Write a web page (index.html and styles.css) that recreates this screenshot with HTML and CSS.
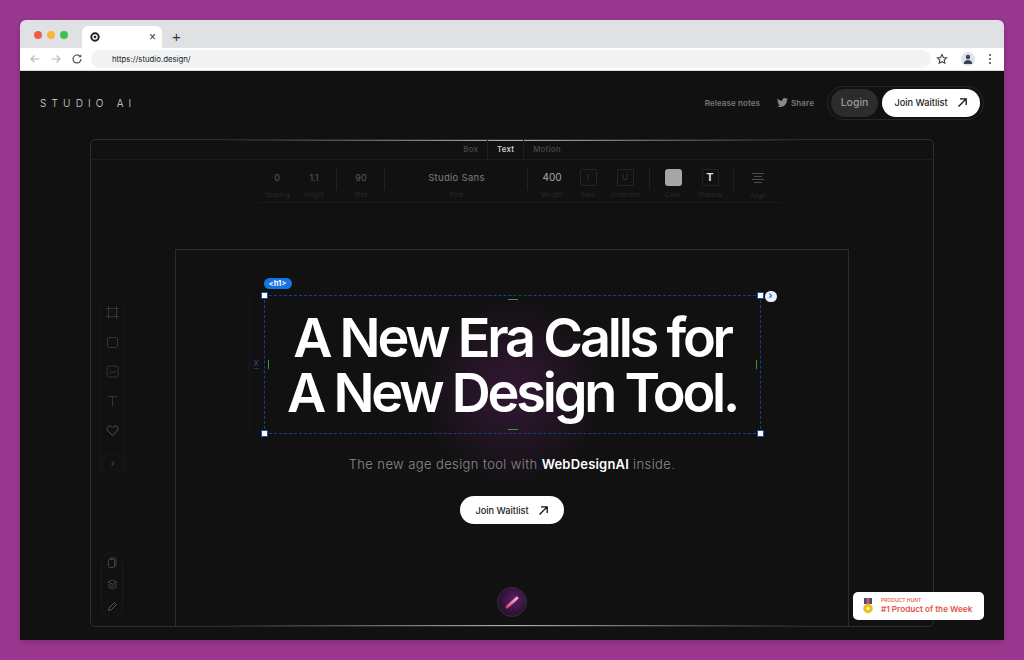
FILE: index.html
```html
<!DOCTYPE html>
<html lang="en">

<head>
    <meta charset="UTF-8">
    <title>Studio AI</title>
    <link rel="stylesheet" href="styles.css">
</head>

<body>

    <div class="window">
        <div class="tabstrip">
            <div class="lights">
                <span class="light red"></span>
                <span class="light yellow"></span>
                <span class="light green"></span>
            </div>
            <div class="tab">
                <svg class="favicon" width="10" height="10" viewBox="0 0 10 10">
                    <circle cx="5" cy="5" r="3.700" fill="none" stroke="#222" stroke-width="2" />
                    <circle cx="5" cy="5" r="1.300" fill="#222" />
                </svg>
                <span class="tab-close">×</span>
            </div>
            <span class="tab-new">+</span>
        </div>

        <div class="toolbar">
            <svg class="nav-icon" width="12" height="12" viewBox="0 0 12 12">
                <path d="M10.500 6H2M5.500 2.500 2 6l3.500 3.500" fill="none" stroke="#b8b8b8" stroke-width="1.100" />
            </svg>
            <svg class="nav-icon" width="12" height="12" viewBox="0 0 12 12">
                <path d="M1.500 6H10M6.500 2.500 10 6l-3.500 3.500" fill="none" stroke="#b8b8b8" stroke-width="1.100" />
            </svg>
            <svg class="nav-icon" width="12" height="12" viewBox="0 0 12 12">
                <path d="M10 6a4 4 0 1 1-1.200-2.900" fill="none" stroke="#555" stroke-width="1.200" />
                <path d="M10.300 1.300v3h-3z" fill="#555" />
            </svg>
            <div class="urlbar">https://studio.design/</div>
            <svg class="star" width="12" height="12" viewBox="0 0 24 24">
                <path d="M12 3l2.800 6 6.400.7-4.800 4.400 1.300 6.400L12 17.300 6.300 20.500l1.300-6.400L2.800 9.700 9.200 9z" fill="none" stroke="#444" stroke-width="2.200" />
            </svg>
            <div class="avatar">
                <svg width="10" height="10" viewBox="0 0 10 10">
                    <circle cx="5" cy="3" r="2.200" fill="#3c4354" />
                    <path d="M.8 10c0-3 2-4 4.200-4s4.200 1 4.200 4z" fill="#3c4354" />
                </svg>
            </div>
            <div class="dots"><span></span><span></span><span></span></div>
        </div>

        <div class="stage">
            <header class="topnav">
                <div class="logo">STUDIO AI</div>
                <nav class="topnav-links">
                    <a class="toplink">Release notes</a>
                    <a class="toplink share">
                        <svg width="11" height="11" viewBox="0 0 24 24">
                            <path d="M23.950 4.570a10 10 0 0 1-2.820.77 4.960 4.960 0 0 0 2.160-2.720c-.95.55-2 .96-3.120 1.200a4.920 4.920 0 0 0-8.380 4.480C7.690 8.100 4.070 6.130 1.640 3.160a4.820 4.820 0 0 0-.67 2.480c0 1.710.87 3.210 2.190 4.100a4.900 4.900 0 0 1-2.230-.62v.06a4.920 4.920 0 0 0 3.950 4.830 5 5 0 0 1-2.210.08 4.940 4.940 0 0 0 4.600 3.420A9.870 9.870 0 0 1 0 19.540a14 14 0 0 0 7.560 2.210c9.050 0 14-7.500 14-13.980 0-.21 0-.42-.01-.63a9.940 9.940 0 0 0 2.460-2.550z" fill="#8a8a8a" />
                        </svg>
                        Share
                    </a>
                    <div class="auth">
                        <a class="login">Login</a>
                        <a class="join">Join Waitlist
                            <svg width="11" height="11" viewBox="0 0 11 11">
                                <path d="M1.500 9.500 9 2M3 1.800h6.200V8" fill="none" stroke="#111" stroke-width="1.300" />
                            </svg>
                        </a>
                    </div>
                </nav>
            </header>

            <section class="editor">
                <div class="modes">
                    <span class="mode">Box</span>
                    <span class="mode active">Text</span>
                    <span class="mode">Motion</span>
                </div>

                <div class="props">
                    <div class="prop-group group-a">
                        <div class="prop w38"><b>0</b><small>Spacing</small></div>
                        <div class="prop w36"><b>1.1</b><small>Height</small></div>
                    </div>
                    <div class="prop-group">
                        <div class="prop w48"><b>90</b><small>Size</small></div>
                    </div>
                    <div class="prop-group">
                        <div class="prop w143"><b class="font-name">Studio Sans</b><small>Font</small></div>
                    </div>
                    <div class="prop-group">
                        <div class="prop w48"><b class="bright">400</b><small>Weight</small></div>
                        <div class="prop w24"><i class="boxed">I</i><small>Italic</small></div>
                        <div class="prop w50"><i class="boxed">U</i><small>Underline</small></div>
                    </div>
                    <div class="prop-group group-e">
                        <div class="prop w46"><i class="swatch"></i><small>Color</small></div>
                        <div class="prop w28"><i class="boxed strong">T</i><small>Shadow</small></div>
                    </div>
                    <div class="prop-group group-f">
                        <div class="prop w48">
                            <svg class="align-icon" width="12" height="12" viewBox="0 0 12 12">
                                <path d="M0 1.500h12M2 4.500h8M0 7.500h12M2 10.500h8" stroke="#4c4c4c" stroke-width="1" />
                            </svg>
                            <small>Align</small>
                        </div>
                    </div>
                </div>

                <div class="artboard">
                    <div class="selection">
                        <span class="tag">&lt;h1&gt;</span>
                        <span class="chevron-badge">›</span>
                        <span class="handle tl"></span>
                        <span class="handle tr"></span>
                        <span class="handle bl"></span>
                        <span class="handle br"></span>
                        <span class="tick top"></span>
                        <span class="tick bottom"></span>
                        <span class="tick left"></span>
                        <span class="tick right"></span>
                        <span class="x-mark">X</span>
                        <h1>A New Era Calls for<br>A New Design Tool.</h1>
                    </div>
                    <p class="subtitle">The new age design tool with <strong>WebDesignAI</strong> inside.</p>
                    <a class="join hero-join">Join Waitlist
                        <svg width="11" height="11" viewBox="0 0 11 11">
                            <path d="M1.500 9.500 9 2M3 1.800h6.200V8" fill="none" stroke="#111" stroke-width="1.300" />
                        </svg>
                    </a>
                </div>

                <div class="tools">
                    <svg width="13" height="13" viewBox="0 0 13 13">
                        <path d="M0 2.500h13M0 10.500h13M2.500 0v13M10.500 0v13" fill="none" stroke="#353535" />
                    </svg>
                    <svg width="13" height="13" viewBox="0 0 13 13">
                        <rect x="1.500" y="1.500" width="10" height="10" rx="1" fill="none" stroke="#353535" />
                    </svg>
                    <svg width="13" height="13" viewBox="0 0 13 13">
                        <rect x="1" y="1" width="11" height="11" rx="1.500" fill="none" stroke="#353535" />
                        <path d="M3 9l2-2.500 2 1.500 3-2.500" fill="none" stroke="#353535" />
                    </svg>
                    <svg width="13" height="13" viewBox="0 0 13 13">
                        <path d="M1.500 1.500h10M6.500 1.500v10" fill="none" stroke="#353535" />
                    </svg>
                    <svg width="13" height="13" viewBox="0 0 13 13">
                        <path d="M6.500 11.500 1.800 6.800a2.800 2.800 0 0 1 4-4l.7.7.7-.7a2.800 2.800 0 0 1 4 4z" fill="none" stroke="#505050" />
                    </svg>
                    <span class="tools-more">›</span>
                </div>

                <div class="tools tools-bottom">
                    <svg width="11" height="11" viewBox="0 0 11 11">
                        <rect x="3" y="1" width="6" height="8" rx="1" fill="none" stroke="#444" />
                        <rect x="1.500" y="2.500" width="6" height="8" rx="1" fill="#111" stroke="#444" />
                    </svg>
                    <svg width="11" height="11" viewBox="0 0 11 11">
                        <path d="M5.500 1 10 3.200 5.500 5.400 1 3.200zM1 5.500l4.500 2.200L10 5.500M1 7.800 5.500 10 10 7.800" fill="none" stroke="#444" />
                    </svg>
                    <svg width="11" height="11" viewBox="0 0 11 11">
                        <path d="M1.500 9.500l.5-2.500 5.500-5.500 2 2L4 9z" fill="none" stroke="#555" />
                    </svg>
                </div>

                <div class="orb"><span></span></div>
            </section>

            <div class="hunt-badge">
                <svg width="10" height="16" viewBox="0 0 10 16">
                    <rect x="1" y="0" width="8" height="6" fill="#3f4a8a" />
                    <rect x="3.500" y="0" width="3" height="6" fill="#d8554a" />
                    <circle cx="5" cy="10.500" r="4.700" fill="#e8c11c" />
                    <circle cx="5" cy="10.500" r="1.800" fill="#fff2a8" />
                </svg>
                <div class="hunt-text">
                    <small>PRODUCT HUNT</small>
                    <b>#1 Product of the Week</b>
                </div>
            </div>
        </div>
    </div>

</body>

</html>
```
FILE: styles.css
```css
* {
    margin: 0;
    padding: 0;
    box-sizing: border-box;
}

html,
body {
    height: 660px;
    overflow: hidden;
}

body {
    background: #9a378f;
    padding: 20px;
    font-family: 'Inter', sans-serif;
}

.window {
    height: 620px;
    border-radius: 6px 6px 0 0;
    overflow: hidden;
    display: flex;
    flex-direction: column;
    box-shadow: 0 2px 6px rgba(0, 0, 0, 0.18);
}

/* browser chrome */

.tabstrip {
    height: 28px;
    background: #dfe1e5;
    display: flex;
    align-items: flex-end;
    flex-shrink: 0;
}

.lights {
    display: flex;
    gap: 5px;
    padding: 0 0 9px 14px;
    width: 62px;
}

.light {
    width: 8px;
    height: 8px;
    border-radius: 50%;
    flex-shrink: 0;
}

.red {
    background: #f05a50;
}

.yellow {
    background: #f5b83d;
}

.green {
    background: #3fc24f;
}

.tab {
    width: 80px;
    height: 22px;
    background: #fff;
    border-radius: 6px 6px 0 0;
    display: flex;
    align-items: center;
    justify-content: space-between;
    padding: 0 6px 0 8px;
}

.tab-close {
    font-family: 'Liberation Sans', sans-serif;
    font-size: 12px;
    color: #333;
}

.tab-new {
    font-family: 'Liberation Sans', sans-serif;
    font-size: 15px;
    line-height: 22px;
    color: #333;
    margin-left: 10px;
}

.toolbar {
    height: 23px;
    background: #fff;
    border-bottom: 1px solid #d8d8d8;
    display: flex;
    align-items: center;
    padding-left: 9px;
    flex-shrink: 0;
}

.nav-icon {
    margin-right: 9px;
    flex-shrink: 0;
}

.urlbar {
    width: 840px;
    height: 18px;
    margin-left: -1px;
    background: #f1f3f4;
    border-radius: 9px;
    font-size: 7.800px;
    line-height: 18px;
    color: #222;
    padding-left: 21px;
}

.star {
    margin-left: 5px;
}

.avatar {
    width: 14px;
    height: 14px;
    border-radius: 50%;
    background: #dfe3ec;
    margin-left: 13px;
    display: flex;
    align-items: center;
    justify-content: center;
    overflow: hidden;
}

.dots {
    display: flex;
    flex-direction: column;
    gap: 2px;
    margin-left: 14px;
}

.dots span {
    width: 2px;
    height: 2px;
    background: #444;
    border-radius: 50%;
}

/* page */

.stage {
    flex: 1;
    position: relative;
    background: #111;
    overflow: hidden;
    display: flex;
    flex-direction: column;
}

.topnav {
    height: 63px;
    margin-bottom: 5px;
    display: flex;
    align-items: center;
    justify-content: space-between;
    padding: 0 20px;
    flex-shrink: 0;
}

.logo {
    font-size: 10px;
    font-weight: 300;
    letter-spacing: 5.200px;
    color: #ddd;
}

.topnav-links {
    display: flex;
    align-items: center;
}

.toplink {
    font-size: 8px;
    font-weight: 600;
    color: #777;
    letter-spacing: 0.1px;
    display: flex;
    align-items: center;
    gap: 3px;
    margin-right: 17px;
}

.share {
    margin-right: 13px;
}

.auth {
    display: flex;
    gap: 4px;
    height: 34px;
    padding: 2px 3px;
    border: 1px solid #262626;
    border-radius: 17px;
}

.login {
    width: 47px;
    height: 28px;
    border-radius: 14px;
    background: #2c2c2c;
    color: #9a9a9a;
    font-size: 10.500px;
    font-weight: 500;
    line-height: 28px;
    text-align: center;
}

.join {
    width: 98px;
    height: 28px;
    border-radius: 14px;
    background: #fff;
    color: #222;
    font-size: 9.200px;
    font-weight: 500;
    display: flex;
    align-items: center;
    justify-content: center;
    gap: 9px;
}

/* editor frame */

.editor {
    flex: 1;
    position: relative;
    margin: 0 70px 13px;
    border: 1px solid #2c2c2c;
    border-radius: 5px;
    display: flex;
    flex-direction: column;
    background:
        linear-gradient(90deg, transparent 15%, #b0b0b0 50%, transparent 85%) top / 100% 1px no-repeat;
}

.modes {
    height: 20px;
    border-bottom: 1px solid #1c1c1c;
    display: flex;
    justify-content: center;
}

.mode {
    font-size: 7.800px;
    font-weight: 600;
    letter-spacing: 0.2px;
    line-height: 19px;
    color: #444;
    padding: 0 9px;
    border-right: 1px solid #202020;
}

.mode:last-child {
    border-right: none;
}

.mode.active {
    color: #ccc;
}

.props {
    height: 43px;
    margin: 0 151px 0 167px;
    border-bottom: 1px solid #1a1a1a;
    display: flex;
    flex-shrink: 0;
}

.prop-group {
    display: flex;
    background: linear-gradient(#202020, #202020) right 8px / 1px 22px no-repeat;
}

.group-a {
    width: 79px;
}

.group-e {
    width: 84px;
}

.group-f {
    background: none;
}

.prop {
    display: flex;
    flex-direction: column;
    align-items: center;
    padding-top: 11px;
    flex-shrink: 0;
}

.prop b {
    font-size: 9px;
    font-weight: 400;
    line-height: 13px;
    color: #5a5a5a;
    height: 14px;
}

.prop b.font-name {
    font-size: 9.500px;
    color: #7e7e7e;
    letter-spacing: 0.3px;
}

.prop b.bright {
    font-size: 10px;
    color: #aaa;
}

.prop small {
    font-size: 6.500px;
    color: #2a2a2a;
    white-space: nowrap;
    line-height: 8px;
    margin-top: 6px;
}

.w24 {
    width: 24px;
}

.w28 {
    width: 28px;
}

.w36 {
    width: 36px;
}

.w38 {
    width: 38px;
}

.w46 {
    width: 46px;
}

.w48 {
    width: 48px;
}

.w50 {
    width: 50px;
}

.w143 {
    width: 143px;
}

.boxed {
    width: 17px;
    height: 17px;
    margin-top: -2px;
    border: 1px solid #262626;
    border-radius: 2px;
    font-size: 8px;
    font-style: normal;
    line-height: 15px;
    text-align: center;
    color: #363636;
}

.boxed.strong {
    border-color: #222;
    color: #ddd;
    font-weight: 700;
    font-size: 11px;
}

.prop .boxed + small,
.prop .swatch + small {
    margin-top: 5px;
}

.swatch {
    width: 17px;
    height: 17px;
    margin-top: -2px;
    border-radius: 3px;
    background: #a6a6a6;
}

.align-icon {
    margin-top: 1px;
    margin-bottom: 2px;
}

/* artboard */

.artboard {
    flex: 1;
    margin: 46px 84px 0;
    border: 1px solid #2c2c2c;
    border-bottom: 0;
    display: flex;
    flex-direction: column;
    align-items: center;
    padding-top: 45px;
    background:
        radial-gradient(circle 95px at 337px 141px, rgba(90, 30, 92, 0.48), rgba(90, 30, 92, 0) 100%),
        linear-gradient(90deg, transparent 5%, #b0b0b0 50%, transparent 95%) bottom / 100% 1px no-repeat;
}

.selection {
    position: relative;
    width: 497px;
    height: 139px;
    border: 1px dashed #1a3f86;
    display: flex;
    align-items: center;
    justify-content: center;
}

.selection::before {
    content: "";
    position: absolute;
    left: -16px;
    top: 0;
    bottom: 0;
    width: 1px;
    background: #191919;
}

h1 {
    font-size: 54px;
    font-weight: 600;
    line-height: 55px;
    letter-spacing: -3.200px;
    color: #fff;
    text-align: center;
}

.tag {
    position: absolute;
    left: -1px;
    top: -18px;
    width: 28px;
    height: 11px;
    border-radius: 6px;
    background: #1473e6;
    color: #fff;
    font-size: 7.500px;
    font-weight: 700;
    line-height: 11px;
    text-align: center;
}

.chevron-badge {
    position: absolute;
    right: -17px;
    top: -5px;
    width: 12px;
    height: 11px;
    border-radius: 6px;
    background: #e8f0fd;
    color: #2f6fd6;
    font-size: 10px;
    font-weight: 700;
    line-height: 9px;
    text-align: center;
}

.handle {
    position: absolute;
    width: 7px;
    height: 7px;
    background: #fff;
    border: 1px solid #1f4f9f;
    border-radius: 1px;
}

.tl {
    left: -4px;
    top: -4px;
}

.tr {
    right: -4px;
    top: -4px;
}

.bl {
    left: -4px;
    bottom: -4px;
}

.br {
    right: -4px;
    bottom: -4px;
}

.tick {
    position: absolute;
    background: #3a9a30;
}

.tick.top {
    top: 3px;
    left: 243px;
    width: 10px;
    height: 1px;
}

.tick.bottom {
    bottom: 3px;
    left: 243px;
    width: 10px;
    height: 1px;
}

.tick.left {
    left: 3px;
    top: 64px;
    width: 1px;
    height: 9px;
}

.tick.right {
    right: 3px;
    top: 64px;
    width: 1px;
    height: 9px;
}

.x-mark {
    position: absolute;
    left: -11px;
    top: 63px;
    font-size: 8px;
    line-height: 9px;
    color: #2d4a94;
    border-bottom: 1px solid #22335f;
}

.subtitle {
    margin-top: 21px;
    font-size: 13px;
    font-weight: 300;
    line-height: 18px;
    letter-spacing: 0.4px;
    color: #8c8c8c;
}

.subtitle strong {
    font-weight: 600;
    letter-spacing: 0.2px;
    color: #fff;
}

.hero-join {
    width: 104px;
    margin-top: 23px;
    flex-shrink: 0;
}

/* side tools */

.tools {
    position: absolute;
    left: 9px;
    top: 155px;
    width: 25px;
    height: 186px;
    border: 1px solid #171717;
    border-radius: 13px;
    display: flex;
    flex-direction: column;
    align-items: center;
    gap: 16.500px;
    padding-top: 10px;
}

.tools-more {
    width: 23px;
    height: 23px;
    margin-top: -1px;
    border: 1px solid #191919;
    border-radius: 50%;
    color: #444;
    font-size: 11px;
    line-height: 19px;
    text-align: center;
    flex-shrink: 0;
}

.tools-bottom {
    top: 412px;
    left: 10px;
    width: 22px;
    height: 65px;
    gap: 11px;
    padding-top: 4px;
    border-color: #1a1a1a;
}

.orb {
    position: absolute;
    left: 406px;
    bottom: 9px;
    width: 30px;
    height: 30px;
    border-radius: 50%;
    border: 1px solid #333;
    background: radial-gradient(circle at 58% 42%, #5c1e68 0%, #32143a 55%, #170e19 100%);
    display: flex;
    align-items: center;
    justify-content: center;
}

.orb span {
    width: 16px;
    height: 3px;
    border-radius: 2px;
    background: linear-gradient(90deg, #d8405f, #f0c0e8);
    transform: rotate(-42deg);
    filter: blur(0.5px);
}

.hunt-badge {
    position: absolute;
    right: 20px;
    bottom: 20px;
    width: 131px;
    height: 28px;
    background: #fff;
    border-radius: 5px;
    display: flex;
    align-items: center;
    gap: 8px;
    padding-left: 10px;
}

.hunt-text {
    display: flex;
    flex-direction: column;
    color: #e4523f;
}

.hunt-text small {
    font-size: 5px;
    font-weight: 500;
    line-height: 7px;
}

.hunt-text b {
    font-size: 8.200px;
    font-weight: 600;
    line-height: 11px;
}
```
